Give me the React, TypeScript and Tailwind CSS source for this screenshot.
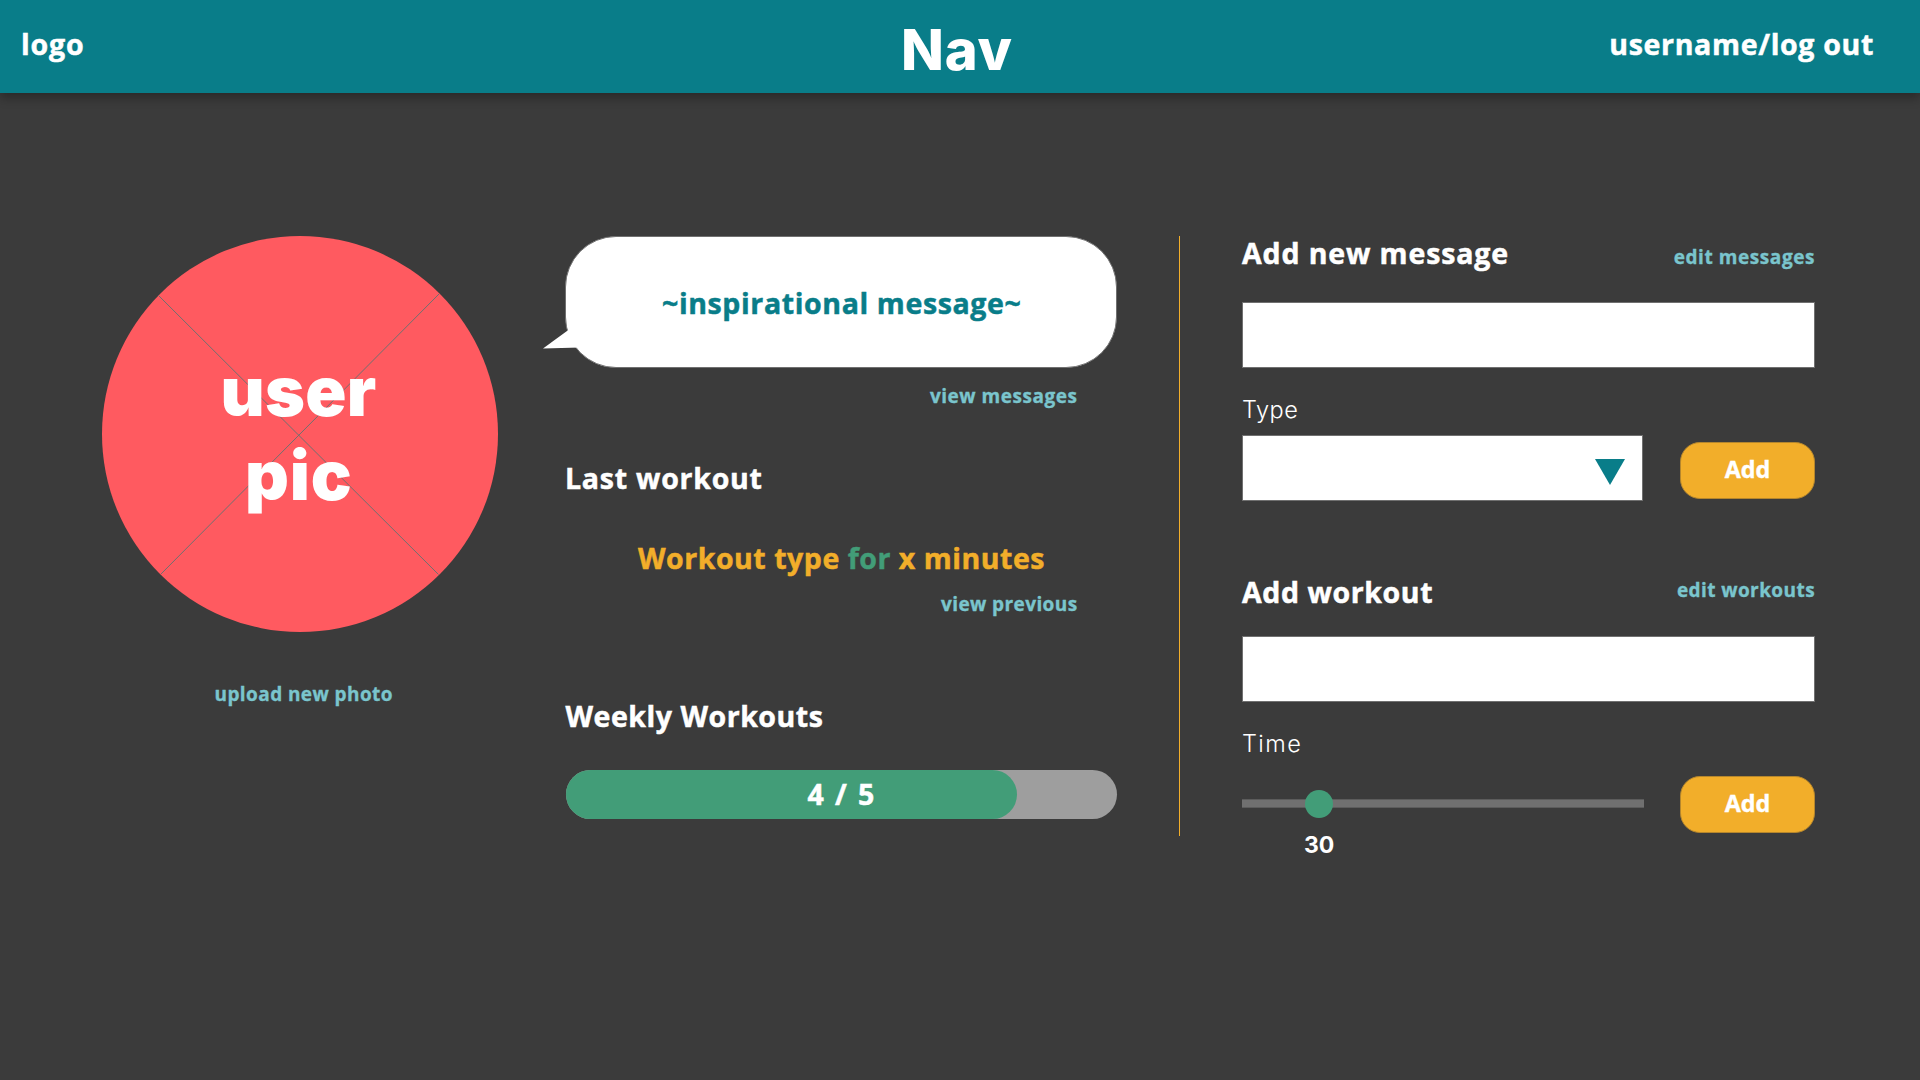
import React from "react";

function Heading({ children, className = "" }: { children: React.ReactNode; className?: string }) {
  return (
    <h2 className={`text-[28.5px] leading-[40px] font-bold whitespace-nowrap [-webkit-text-stroke:0.5px_currentColor] ${className}`}>
      {children}
    </h2>
  );
}

function TextLink({ children, className = "" }: { children: React.ReactNode; className?: string }) {
  return (
    <a
      href="#"
      className={`text-[19px] leading-[28px] font-bold whitespace-nowrap text-[#7AC5CD] [-webkit-text-stroke:0.35px_currentColor] ${className}`}
    >
      {children}
    </a>
  );
}

function AddButton({ className = "" }: { className?: string }) {
  return (
    <button
      type="button"
      className={`h-[57px] w-[135px] shrink-0 rounded-[20px] border border-[#b5862d] bg-[#F2AE2A] pb-[3px] text-[23.3px] leading-[32px] font-bold text-white [-webkit-text-stroke:0.4px_currentColor] ${className}`}
    >
      Add
    </button>
  );
}

function Header() {
  return (
    <header className="grid h-[93px] grid-cols-[900px_1fr_auto] items-start bg-[#097D89] pr-[46px] shadow-[0_5px_10px_rgba(0,0,0,0.3)]">
      <Heading className="mt-[24px] ml-[21px] tracking-[0.83px]">logo</Heading>
      <h1 className="mt-[20px] ml-px font-['Inter',sans-serif] text-[56px] leading-[60px] font-extrabold tracking-[0.8px]">Nav</h1>
      <Heading className="mt-[24px] tracking-[0.68px]">username/log out</Heading>
    </header>
  );
}

function Profile() {
  return (
    <section className="flex w-[396px] shrink-0 flex-col">
      <div className="relative size-[396px] rounded-full bg-[#FF5A60]">
        <svg className="absolute inset-0 size-full" viewBox="0 0 396 396" stroke="#707070" strokeWidth="1">
          <path d="M56.5 59.5 336.5 338.5M337 58 59 338" />
        </svg>
        <div className="relative flex flex-col pt-[113px] font-['Inter',sans-serif] text-[68px] leading-[84px] font-black">
          <span className="pl-[118.5px] tracking-[0.3px]">user</span>
          <span className="pl-[143px] tracking-[0.9px]">pic</span>
        </div>
      </div>
      <TextLink className="mt-[48px] ml-[112.5px] tracking-[0.42px]">upload new photo</TextLink>
    </section>
  );
}

function Overview() {
  return (
    <section className="ml-[67px] flex w-[552px] shrink-0 flex-col">
      <div className="relative h-[132px] rounded-[51px] border border-[#707070] bg-white">
        <svg className="absolute top-[92px] -left-[24px] h-[22px] w-[38px]" viewBox="0 0 38 22" fill="#fff">
          <path d="M1 19.5 26 1.2 38 3V18.6Z" />
        </svg>
        <Heading className="mt-[46px] ml-[96px] tracking-[0.62px] text-[#097D89]">~inspirational message~</Heading>
      </div>
      <TextLink className="mt-[14px] mr-[39.5px] self-end tracking-[0.53px]">view messages</TextLink>
      <Heading className="mt-[48px] tracking-[0.75px]">Last workout</Heading>
      <Heading className="mt-[40px] ml-[73px] tracking-[0.53px] text-[#F2AE2A]">
        Workout type <span className="text-[#429D78]">for</span> x minutes
      </Heading>
      <TextLink className="mt-[12px] mr-[39.5px] self-end tracking-[0.4px]">view previous</TextLink>
      <Heading className="mt-[78px] ml-[0.5px] tracking-[0.53px]">Weekly Workouts</Heading>
      <div className="relative mt-[34px] ml-px h-[49px] rounded-full bg-[#9E9E9E]">
        <div className="h-full w-[451px] rounded-full bg-[#429D78]" />
        <Heading className="absolute top-[4px] left-[241.5px] tracking-[1.9px]">4 / 5</Heading>
      </div>
    </section>
  );
}

function Forms() {
  return (
    <section className="ml-[62px] flex w-[573px] shrink-0 flex-col">
      <div className="-mt-[3px] flex items-baseline justify-between">
        <Heading className="tracking-[0.88px]">Add new message</Heading>
        <TextLink className="tracking-[0.57px]">edit messages</TextLink>
      </div>
      <div className="mt-[29px] h-[66px] border border-[#707070] bg-white" />
      <span className="mt-[26px] font-['Inter',sans-serif] text-[23.5px] leading-[32px] font-[330] tracking-[0.5px]">Type</span>
      <div className="mt-[9px] flex justify-between">
        <div className="flex h-[66px] w-[401px] justify-end border border-[#707070] bg-white pt-[23px] pr-[17px]">
          <svg className="h-[26px] w-[30px]" viewBox="0 0 30 26" fill="#097D89">
            <path d="M0 0H30L15 26Z" />
          </svg>
        </div>
        <AddButton className="mt-[7px]" />
      </div>

      <div className="mt-[71px] flex items-start justify-between">
        <Heading className="tracking-[0.6px]">Add workout</Heading>
        <TextLink className="mt-[4px] tracking-[0.42px]">edit workouts</TextLink>
      </div>
      <div className="mt-[24px] h-[66px] border border-[#707070] bg-white" />
      <span className="mt-[26px] font-['Inter',sans-serif] text-[23.5px] leading-[32px] font-[330] tracking-[1.4px]">Time</span>
      <div className="mt-[16px] flex justify-between">
        <div className="relative mt-[23px] h-[9px] w-[402px] border-y border-[#5c5c5c] bg-[#707070]">
          <div className="absolute -top-[10px] left-[63px] size-[28px] rounded-full bg-[#429D78]" />
          <span className="absolute top-[29px] left-[62px] font-['Inter',sans-serif] text-[23px] leading-[32px] font-bold">30</span>
        </div>
        <AddButton />
      </div>
    </section>
  );
}

export default function App() {
  return (
    <div className="h-[1080px] w-[1920px] overflow-hidden bg-[#3B3B3B] font-['Open_Sans',sans-serif] text-white">
      <Header />
      <main className="flex pt-[143px] pl-[102px]">
        <Profile />
        <Overview />
        <div className="ml-[62px] h-[600px] w-px shrink-0 bg-[#F2AE2A]" />
        <Forms />
      </main>
    </div>
  );
}
